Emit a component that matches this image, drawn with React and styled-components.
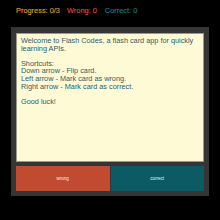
import React from "react";
import styled, { createGlobalStyle } from "styled-components";

const GlobalStyle = createGlobalStyle`
  body {
    margin: 0;
    background: #000;
    font-family: "Liberation Sans", Arial, sans-serif;
  }
`;

const Page = styled.div`
  width: 220px;
  height: 220px;
  background: #000;
  display: flex;
  flex-direction: column;
`;

const Score = styled.div`
  display: flex;
  height: 27px;
  padding-left: 16px;
  padding-top: 6px;
  box-sizing: border-box;
  font-size: 7.4px;
  line-height: 9px;
  white-space: nowrap;
`;

const Stat = styled.span`
  color: ${(p) => p.color};
  margin-right: ${(p) => p.gap || 0}px;
  -webkit-text-stroke: 0.15px ${(p) => p.color};
`;

const Panel = styled.div`
  margin: 0 11px;
  height: 169px;
  background: #353535;
  padding: 6px 5px 5px;
  box-sizing: border-box;
  display: flex;
  flex-direction: column;
  gap: 4px;
`;

const Card = styled.div`
  height: 129px;
  background: #fffad6;
  box-shadow: inset 0 0 0 1px #9a9a88;
  padding: 4px 5px;
  box-sizing: border-box;
  color: #2d6068;
  font-size: 7.3px;
  line-height: 7.6px;
  white-space: pre-line;
`;

const Buttons = styled.div`
  display: flex;
  height: 25px;
  gap: 1px;
`;

const Button = styled.button`
  flex: 1;
  border: none;
  margin: 0;
  padding: 0;
  background: ${(p) => p.bg};
  color: #f4f4f4;
  font-family: "Liberation Sans", Arial, sans-serif;
  font-size: 4.5px;
`;

const text = `Welcome to Flash Codes, a flash card app for quickly learning APIs.

Shortcuts:
Down arrow - Flip card.
Left arrow - Mark card as wrong.
Right arrow - Mark card as correct.

Good luck!`;

export default function App() {
  return (
    <Page>
      <GlobalStyle />
      <Score>
        <Stat color="#dc9c2c" gap={7}>Progress: 0/3</Stat>
        <Stat color="#de4a36" gap={8}>Wrong: 0</Stat>
        <Stat color="#1b7888">Correct: 0</Stat>
      </Score>
      <Panel>
        <Card>{text}</Card>
        <Buttons>
          <Button bg="#c04b31">wrong</Button>
          <Button bg="#0b5a64">correct</Button>
        </Buttons>
      </Panel>
    </Page>
  );
}
